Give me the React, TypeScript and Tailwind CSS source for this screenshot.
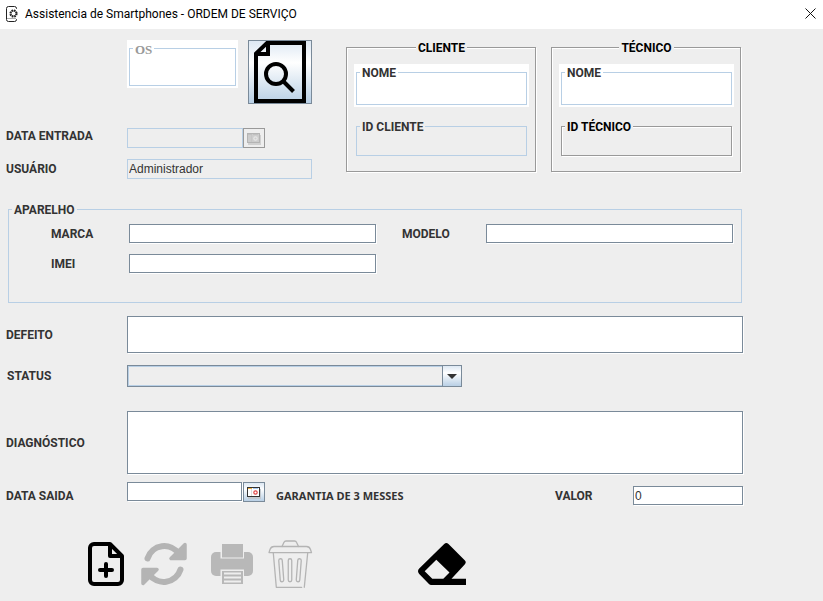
import type { ReactNode } from "react";

const label = "font-['Roboto','Liberation_Sans',sans-serif] text-xs leading-4 font-bold text-[#333]";
const legend = "pt-0.5 px-0.5 font-['Roboto','Liberation_Sans',sans-serif] text-xs leading-[13px] font-bold";
const field =
  "min-w-0 rounded-none border border-[#7a8a99] bg-white px-px text-xs text-[#333] shadow-[1px_1px_0_#fff] outline-none";
const lockedField = "min-w-0 rounded-none border border-[#b8cfe5] bg-[#eee] px-px text-xs text-[#333] outline-none";
const etched = "border border-[#999] shadow-[1px_1px_0_#fff,inset_1px_1px_0_#fff]";
const steel = "bg-[linear-gradient(#dde8f3,#fff_35%,#b8cfe5)]";

function TitledInput({ id, title, etch = false }: { id: string; title: string; etch?: boolean }) {
  return (
    <fieldset className={`flex h-full min-w-0 flex-col pl-[3px] ${etch ? etched : "border border-[#b8cfe5]"}`}>
      <legend className={`${legend} ${etch ? "bg-[#eee] text-black" : "text-[#333]"}`}>
        <label htmlFor={id}>{title}</label>
      </legend>
      <input id={id} className="block h-4 w-full bg-transparent text-xs outline-none" />
    </fieldset>
  );
}

function PersonPanel({ title, idTitle, prefix, etch }: { title: string; idTitle: string; prefix: string; etch?: boolean }) {
  return (
    <fieldset className={`min-w-0 pt-[9px] pr-1.5 pb-[15px] pl-[7px] ${etched}`}>
      <legend className={`${legend} mx-auto bg-[#eee] text-black`}>{title}</legend>
      <div className="h-[43px] bg-white px-0.5 pt-px pb-0.5">
        <TitledInput id={`${prefix}-nome`} title="NOME" />
      </div>
      <div className="mx-0.5 mt-3 h-[37px]">
        <TitledInput id={`${prefix}-id`} title={idTitle} etch={etch} />
      </div>
    </fieldset>
  );
}

function CalendarIcon({ off = false }: { off?: boolean }) {
  return (
    <svg viewBox="0 0 14 12" className="h-3 w-3.5" shapeRendering="crispEdges">
      <rect x="1" y="2" width="13" height="10" fill={off ? "#d0d0d0" : "#c3c9cf"} />
      <rect x="0" y="0" width="13" height="10" fill={off ? "#b4b4b4" : "#333"} />
      <rect x="1" y="1" width="11" height="8" fill={off ? "#ccc" : "#fff"} />
      <rect x="1" y="1" width="4" height="1" fill={off ? "#c0c0c0" : "#f0b040"} />
      <rect x="6" y="1" width="5" height="1" fill={off ? "#c0c0c0" : "#a8c8ee"} />
      <rect x="4" y="2" width="1" height="7" fill={off ? "#c6c6c6" : "#ddd"} />
      <circle cx="8.500" cy="5.500" r="1.700" fill="none" stroke={off ? "#e6e6e6" : "#e04848"} strokeWidth="1.200" shapeRendering="auto" />
    </svg>
  );
}

function Tool({ name, disabled, className = "", children }: { name: string; disabled?: boolean; className?: string; children: ReactNode }) {
  return (
    <button type="button" aria-label={name} disabled={disabled} className={`size-12 shrink-0 ${className}`}>
      <svg viewBox="0 0 48 48" className="size-12" fill="none">
        {children}
      </svg>
    </button>
  );
}

export default function App() {
  return (
    <div className="min-h-screen bg-[#eee] font-['Liberation_Sans',Arial,sans-serif]">
      <header className="flex h-[29px] items-center bg-white pr-[7px] pb-0.5 pl-1.5">
        <svg viewBox="0 0 13 16" className="mr-1.5 h-4 w-[13px]" fill="none" stroke="#222">
          <path d="M10.5 3V2.500Q10.500.5 8.500.5h-6Q.500.5.500 2.500v11Q.500 15.500 2.500 15.500h6Q10.500 15.500 10.500 13.500V13" />
          <path d="M1 12.500h9" stroke="#aaa" />
          <circle cx="7.500" cy="7.500" r="3.300" strokeWidth="1.600" strokeDasharray="1.700 .9" />
          <circle cx="7.500" cy="7.500" r="2.400" strokeWidth=".8" />
        </svg>
        <h1 className="font-['Roboto','Noto_Sans',sans-serif] text-xs text-black">
          Assistencia de Smartphones - ORDEM DE SERVIÇO
        </h1>
        <button type="button" aria-label="Fechar" className="ml-auto">
          <svg viewBox="0 0 11 11" className="size-[11px]" stroke="#111" fill="none">
            <path d="M.5.5l10 10M10.500.5l-10 10" />
          </svg>
        </button>
      </header>

      <main className="pt-[11px] pr-20 pb-3 pl-1.5">
        <section className="flex items-start pr-0.5">
          <div className="w-[306px] shrink-0">
            <div className="flex items-start gap-2.5 pl-[121px]">
              <div className="h-12 w-[111px] bg-white px-0.5 pt-px pb-0.5">
                <fieldset className="h-full min-w-0 border border-[#b8cfe5] pl-[3px]">
                  <legend className="pt-0.5 pr-0.5 pl-0.5 font-['Liberation_Serif',serif] text-[13px] leading-[13px] font-bold text-[#999]">
                    <label htmlFor="os">OS</label>
                  </legend>
                  <input id="os" className="block h-5 w-full bg-transparent text-xs outline-none" />
                </fieldset>
              </div>
              <button type="button" aria-label="Pesquisar OS" className={`size-16 shrink-0 border border-[#7a8a99] ${steel}`}>
                <svg viewBox="1 1 62 62" className="size-full" fill="none" stroke="#000" strokeWidth="4">
                  <path d="M19 3H56V61H8V13.500Z" />
                  <path d="M20 3V14H8" />
                  <circle cx="28" cy="34" r="10" />
                  <path d="M35 41L45.500 51.500" />
                </svg>
              </button>
            </div>
            <div className="mt-6 flex h-5 items-start">
              <label htmlFor="entrada" className={`${label} w-[121px]`}>DATA ENTRADA</label>
              <input id="entrada" disabled className={`${lockedField} h-5 w-[116px]`} />
              <button type="button" disabled aria-label="Escolher data de entrada" className="flex h-5 w-[22px] items-center justify-center border border-[#999] pt-0.5">
                <CalendarIcon off />
              </button>
            </div>
            <div className="mt-[11px] flex h-5 items-center">
              <label htmlFor="usuario" className={`${label} w-[121px]`}>USUÁRIO</label>
              <input id="usuario" readOnly defaultValue="Administrador" className={`${lockedField} h-5 flex-1`} />
            </div>
          </div>
          <div className="ml-[34px] grid flex-1 grid-cols-2 gap-[15px]">
            <PersonPanel title="CLIENTE" idTitle="ID CLIENTE" prefix="cliente" />
            <PersonPanel title="TÉCNICO" idTitle="ID TÉCNICO" prefix="tecnico" etch />
          </div>
        </section>

        <fieldset className="mt-[23px] mr-px ml-0.5 h-[101px] min-w-0 border border-[#b8cfe5] pl-[3px]">
          <legend className={`${legend} text-[#333]`}>APARELHO</legend>
          <div className="grid grid-cols-[78px_1fr_110px_1fr] items-center gap-y-[11px] pt-[7px] pr-2 pl-[39px]">
            <label htmlFor="marca" className={label}>MARCA</label>
            <input id="marca" className={`${field} h-[19px]`} />
            <label htmlFor="modelo" className={`${label} pl-[26px]`}>MODELO</label>
            <input id="modelo" className={`${field} h-[19px]`} />
            <label htmlFor="imei" className={label}>IMEI</label>
            <input id="imei" className={`${field} h-[19px]`} />
          </div>
        </fieldset>

        <div className="mt-[13px] flex items-center">
          <label htmlFor="defeito" className={`${label} w-[121px]`}>DEFEITO</label>
          <input id="defeito" className={`${field} h-[37px] flex-1`} />
        </div>

        <div className="mt-3 flex items-center">
          <label htmlFor="status" className={`${label} w-[121px] pl-px`}>STATUS</label>
          <div className="relative h-[22px] w-[335px]">
            <select
              id="status"
              className="block size-full appearance-none rounded-none border border-[#7a8a99] bg-[#eee] pl-1 text-xs text-[#333] shadow-[inset_0_0_0_1px_#b8cfe5] outline-none"
            >
              <option value=""></option>
            </select>
            <span className={`pointer-events-none absolute top-0 right-0 flex h-full w-5 items-center justify-center border border-[#7a8a99] ${steel}`}>
              <svg viewBox="0 0 10 5" className="h-[5px] w-2.5" fill="#333">
                <path d="M0 0h10L5 5z" />
              </svg>
            </span>
          </div>
        </div>

        <div className="mt-6 flex items-center">
          <label htmlFor="diagnostico" className={`${label} w-[121px]`}>DIAGNÓSTICO</label>
          <textarea id="diagnostico" className={`${field} h-[63px] flex-1 resize-none`} />
        </div>

        <div className="mt-2 flex h-6 items-end">
          <label htmlFor="saida" className={`${label} w-[121px] pb-0.5`}>DATA SAIDA</label>
          <input id="saida" className={`${field} h-[19px] w-[115px] self-start`} />
          <button type="button" aria-label="Escolher data de saída" className={`ml-px flex h-5 w-[22px] items-center justify-center self-start border border-[#7a8a99] pt-0.5 ${steel}`}>
            <CalendarIcon />
          </button>
          <p className="ml-[11px] pb-0.5 font-['Noto_Sans','Open_Sans',sans-serif] text-[11px] leading-4 font-bold text-[#333]">
            GARANTIA DE 3 MESSES
          </p>
          <label htmlFor="valor" className={`${label} ml-auto w-[78px] pb-0.5`}>VALOR</label>
          <input id="valor" defaultValue="0" className={`${field} mb-px h-[19px] w-[110px]`} />
        </div>

        <div className="mt-[34px] flex pl-[76px]">
          <Tool name="Adicionar">
            <g stroke="#000" strokeWidth="4" strokeLinejoin="round">
              <path d="M28 4H12a4 4 0 0 0-4 4v32a4 4 0 0 0 4 4h24a4 4 0 0 0 4-4V16Z" />
              <path d="M28 4v12h12" />
              <path d="M18 30h12M24 24v12" strokeLinecap="round" />
            </g>
          </Tool>
          <Tool name="Atualizar" disabled className="ml-2.5">
            {[0, 180].map((angle) => (
              <g key={angle} transform={`rotate(${angle} 24 24)`} stroke="#b4b4b4">
                <path d="M7.500 18.500A17.600 17.600 0 0 1 39 14" strokeWidth="6" strokeLinecap="round" />
                <path d="M31 18.500H45V4.500Z" fill="#b4b4b4" strokeWidth="3.500" strokeLinejoin="round" />
              </g>
            ))}
          </Tool>
          <Tool name="Imprimir" disabled className="ml-5">
            <rect x="3" y="12" width="42" height="24" rx="5" fill="#b8b8b8" />
            <path d="M12.500 10h23.500v8.500h-23.500zM12.500 29.500h23.500v8h-23.500z" fill="#eee" />
            <path d="M14 4h21v13.500h-21zM14 31h21v13h-21z" fill="#b8b8b8" />
            <path d="M16 33.500h17M16 37.500h17M16 41.500h17" stroke="#eee" strokeWidth="1.800" />
          </Tool>
          <Tool name="Excluir" disabled className="ml-2.5">
            <g stroke="#b4b4b4" strokeWidth="1.300" strokeLinejoin="round" strokeLinecap="round">
              <path d="M16 6.500L18 2.200Q18.600 1 20 1h8.500Q30 1 30.500 2.200L32.500 6.500" />
              <path d="M8 6.500H40.500Q43.500 6.500 44.500 9.500L45.500 12.600H3L4 9.500Q5 6.500 8 6.500Z" />
              <path d="M7.300 13L10.300 47.300H35.700M41.700 13L38.300 47.300" />
              <path d="M14.500 20.500L16 40M24 20.500V40M33.500 20.500L32 40" strokeWidth="4.800" />
              <path d="M14.500 20.500L16 40M24 20.500V40M33.500 20.500L32 40" stroke="#eee" strokeWidth="2.200" />
            </g>
          </Tool>
          <Tool name="Limpar" className="ml-[104px]">
            <path
              fill="#000"
              fillRule="evenodd"
              d="M26.200 4Q28.300 2 30.500 4L46.700 20.200Q48.800 22.300 46.700 24.600L33.500 38.700H48V45H13Q12 45 11.200 44.200L1.200 34Q-1.200 31.300 1.200 28.600ZM18.300 19.700L6.700 31.300L14.300 38.700H25.300L31.500 32.500Z"
            />
          </Tool>
        </div>
      </main>
    </div>
  );
}
